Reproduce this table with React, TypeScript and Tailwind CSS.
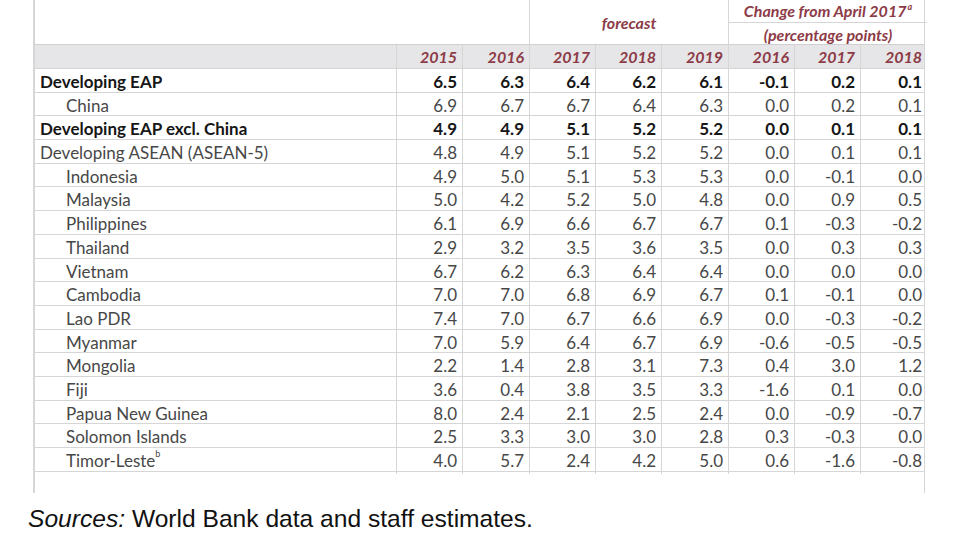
import React from 'react';

type Row = {
  name: string;
  level: 'bold' | 'plain' | 'indent';
  values: string[];
  sup?: string;
};

const rows: Row[] = [
  { name: 'Developing EAP', level: 'bold', values: ['6.5', '6.3', '6.4', '6.2', '6.1', '-0.1', '0.2', '0.1'] },
  { name: 'China', level: 'indent', values: ['6.9', '6.7', '6.7', '6.4', '6.3', '0.0', '0.2', '0.1'] },
  { name: 'Developing EAP excl. China', level: 'bold', values: ['4.9', '4.9', '5.1', '5.2', '5.2', '0.0', '0.1', '0.1'] },
  { name: 'Developing ASEAN (ASEAN-5)', level: 'plain', values: ['4.8', '4.9', '5.1', '5.2', '5.2', '0.0', '0.1', '0.1'] },
  { name: 'Indonesia', level: 'indent', values: ['4.9', '5.0', '5.1', '5.3', '5.3', '0.0', '-0.1', '0.0'] },
  { name: 'Malaysia', level: 'indent', values: ['5.0', '4.2', '5.2', '5.0', '4.8', '0.0', '0.9', '0.5'] },
  { name: 'Philippines', level: 'indent', values: ['6.1', '6.9', '6.6', '6.7', '6.7', '0.1', '-0.3', '-0.2'] },
  { name: 'Thailand', level: 'indent', values: ['2.9', '3.2', '3.5', '3.6', '3.5', '0.0', '0.3', '0.3'] },
  { name: 'Vietnam', level: 'indent', values: ['6.7', '6.2', '6.3', '6.4', '6.4', '0.0', '0.0', '0.0'] },
  { name: 'Cambodia', level: 'indent', values: ['7.0', '7.0', '6.8', '6.9', '6.7', '0.1', '-0.1', '0.0'] },
  { name: 'Lao PDR', level: 'indent', values: ['7.4', '7.0', '6.7', '6.6', '6.9', '0.0', '-0.3', '-0.2'] },
  { name: 'Myanmar', level: 'indent', values: ['7.0', '5.9', '6.4', '6.7', '6.9', '-0.6', '-0.5', '-0.5'] },
  { name: 'Mongolia', level: 'indent', values: ['2.2', '1.4', '2.8', '3.1', '7.3', '0.4', '3.0', '1.2'] },
  { name: 'Fiji', level: 'indent', values: ['3.6', '0.4', '3.8', '3.5', '3.3', '-1.6', '0.1', '0.0'] },
  { name: 'Papua New Guinea', level: 'indent', values: ['8.0', '2.4', '2.1', '2.5', '2.4', '0.0', '-0.9', '-0.7'] },
  { name: 'Solomon Islands', level: 'indent', values: ['2.5', '3.3', '3.0', '3.0', '2.8', '0.3', '-0.3', '0.0'] },
  { name: 'Timor-Leste', sup: 'b', level: 'indent', values: ['4.0', '5.7', '2.4', '4.2', '5.0', '0.6', '-1.6', '-0.8'] },
];

const years = ['2015', '2016', '2017', '2018', '2019', '2016', '2017', '2018'];

const cols = 'grid grid-cols-[362px_66px_67px_66px_66px_67px_66px_66px_66px]';

export default function App() {
  return (
    <div className="w-[960px] h-[540px] bg-white overflow-hidden" style={{ fontFamily: 'Lato, "Open Sans", sans-serif' }}>
      <div className="ml-[33px] w-[892px] border-l-2 border-r border-[#d6d6d6]">
        {/* top header */}
        <div className="grid grid-cols-[495px_199px_198px] h-[44px]">
          <div className="border-r border-[#d6d6d6]" />
          <div className="border-r border-[#d6d6d6] flex items-center justify-center pb-[2px] text-[16px] italic font-bold text-[#8c3b47]">
            forecast
          </div>
          <div className="flex flex-col">
            <div className="h-[23px] border-b border-[#d6d6d6] flex items-center justify-center text-[16px] italic font-bold text-[#8c3b47]">
              Change from April 2017<sup className="text-[9px] ml-[1px]">a</sup>
            </div>
            <div className="flex-1 flex items-center justify-center text-[16px] italic font-bold text-[#8c3b47]">
              (percentage points)
            </div>
          </div>
        </div>
        {/* year row */}
        <div className={`${cols} h-[24px] bg-[#e6e6e8] border-t border-[#d0d0d0]`}>
          <div className="border-r border-[#d6d6d6]" />
          {years.map((y, i) => (
            <div
              key={i}
              className={`flex items-center justify-end pr-[5px] text-[16px] italic font-bold text-[#8c3b47] ${i < 7 ? 'border-r border-[#d6d6d6]' : ''}`}
            >
              {y}
            </div>
          ))}
        </div>
        {/* data rows */}
        {rows.map((r) => {
          const bold = r.level === 'bold';
          const tone = bold ? 'font-bold text-[#161616]' : 'text-[#474747]';
          return (
            <div key={r.name} className={`${cols} h-[23.7px] border-t border-[#d6d6d6]`}>
              <div
                className={`flex items-center border-r border-[#d6d6d6] text-[17px] ${tone} ${
                  r.level === 'indent' ? 'pl-[31px]' : 'pl-[5px]'
                }`}
              >
                {r.name}
                {r.sup && <sup className="text-[9px] -translate-y-[2px]">{r.sup}</sup>}
              </div>
              {r.values.map((v, i) => (
                <div
                  key={i}
                  className={`flex items-center justify-end pr-[5px] text-[17px] ${tone} ${
                    i < 7 ? 'border-r border-[#d6d6d6]' : ''
                  }`}
                >
                  {v}
                </div>
              ))}
            </div>
          );
        })}
        <div className="h-[22px] border-t border-[#d6d6d6]" />
      </div>
      <p className="mt-[11px] ml-[28px] text-[24.6px] leading-[30px] text-[#111]" style={{ fontFamily: '"Liberation Sans", Arial, sans-serif' }}>
        <span className="italic">Sources:</span> World Bank data and staff estimates.
      </p>
    </div>
  );
}
